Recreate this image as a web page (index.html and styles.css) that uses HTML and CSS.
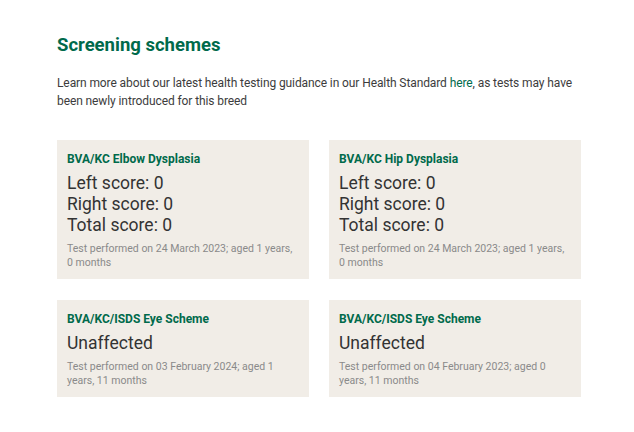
FILE: index.html
```html
<!DOCTYPE html>
<html lang="en">
<head>
  <meta charset="UTF-8">
  <title>Screening schemes</title>
  <link rel="stylesheet" href="styles.css">
</head>
<body>
  <div class="section">
    <h2 class="title">Screening schemes</h2>
    <p class="intro">Learn more about our latest health testing guidance in our Health Standard <a href="#">here</a>, as tests may have been newly introduced for this breed</p>

    <div class="grid">
      <div class="card">
        <div class="card-title">BVA/KC Elbow Dysplasia</div>
        <div class="result">Left score: 0</div>
        <div class="result">Right score: 0</div>
        <div class="result">Total score: 0</div>
        <div class="meta">Test performed on 24 March 2023; aged 1 years, 0 months</div>
      </div>
      <div class="card">
        <div class="card-title">BVA/KC Hip Dysplasia</div>
        <div class="result">Left score: 0</div>
        <div class="result">Right score: 0</div>
        <div class="result">Total score: 0</div>
        <div class="meta">Test performed on 24 March 2023; aged 1 years, 0 months</div>
      </div>
      <div class="card">
        <div class="card-title">BVA/KC/ISDS Eye Scheme</div>
        <div class="result">Unaffected</div>
        <div class="meta">Test performed on 03 February 2024; aged 1 years, 11 months</div>
      </div>
      <div class="card">
        <div class="card-title">BVA/KC/ISDS Eye Scheme</div>
        <div class="result">Unaffected</div>
        <div class="meta">Test performed on 04 February 2023; aged 0 years, 11 months</div>
      </div>
    </div>
  </div>
</body>
</html>
```

FILE: styles.css
```css
body {
    margin: 0;
    background: #fff;
    font-family: Roboto, "Liberation Sans", sans-serif;
    color: #333;
}

.section {
    width: 524px;
    padding: 34px 0 0 57px;
}

.title {
    margin: 0 0 18px;
    font-size: 18.5px;
    font-weight: bold;
    color: #006a4b;
    line-height: 22px;
}

.intro {
    margin: 0 0 30px;
    font-size: 12px;
    letter-spacing: -0.1px;
    line-height: 18px;
    color: #3c3c3c;
}

.intro a {
    color: #006a4b;
    text-decoration: none;
}

.grid {
    display: grid;
    grid-template-columns: 252px 252px;
    column-gap: 20px;
    row-gap: 21px;
}

.card {
    background-color: #f1ede7;
    padding: 11px 10px 9px;
}

.card-title {
    font-size: 12px;
    font-weight: bold;
    color: #006a4b;
    line-height: 16px;
    margin-bottom: 6px;
}

.result {
    font-size: 17.5px;
    line-height: 21px;
    color: #333;
}

.meta {
    margin-top: 6px;
    font-size: 10.5px;
    line-height: 14px;
    color: #8a8a8a;
}
```
